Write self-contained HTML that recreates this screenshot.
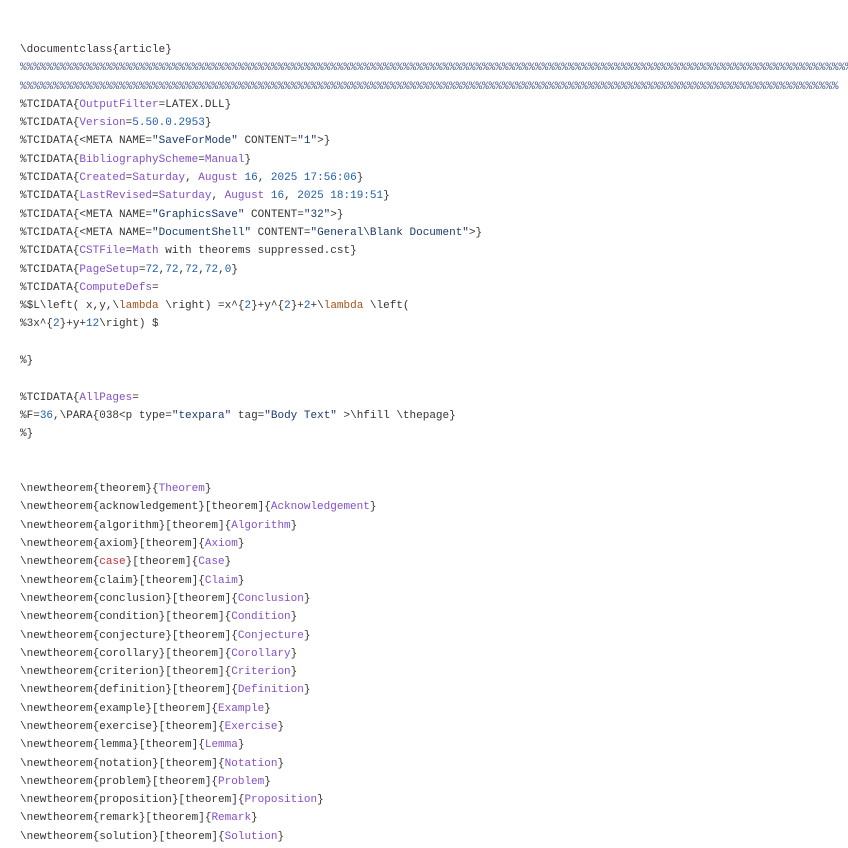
<!DOCTYPE html>
<html><head><meta charset="utf-8"><style>
html,body{margin:0;padding:0;background:#fff;width:848px;height:848px;overflow:hidden}
pre{margin:0;padding:41px 0 0 20px;font-family:"Liberation Mono",monospace;font-size:11px;line-height:18.3px;color:#333;white-space:pre}
.k{color:#8450c4}.n{color:#1f5ea8}.s{color:#1b3a6b}.l{color:#a0521e}.r{color:#c0303a}.p{color:#4a5a8c}
</style></head><body><pre>\documentclass{article}
<span class="p">%%%%%%%%%%%%%%%%%%%%%%%%%%%%%%%%%%%%%%%%%%%%%%%%%%%%%%%%%%%%%%%%%%%%%%%%%%%%%%%%%%%%%%%%%%%%%%%%%%%%%%%%%%%%%%%%%%%%%%%%%%%%%%%%</span>
<span class="p">%%%%%%%%%%%%%%%%%%%%%%%%%%%%%%%%%%%%%%%%%%%%%%%%%%%%%%%%%%%%%%%%%%%%%%%%%%%%%%%%%%%%%%%%%%%%%%%%%%%%%%%%%%%%%%%%%%%%%%%%%%%%</span>
%TCIDATA{<span class="k">OutputFilter</span>=LATEX.DLL}
%TCIDATA{<span class="k">Version</span>=<span class="n">5.50.0.2953</span>}
%TCIDATA{&lt;META NAME=<span class="s">"SaveForMode"</span> CONTENT=<span class="s">"1"</span>&gt;}
%TCIDATA{<span class="k">BibliographyScheme</span>=<span class="k">Manual</span>}
%TCIDATA{<span class="k">Created</span>=<span class="k">Saturday</span>, <span class="k">August</span> <span class="n">16</span>, <span class="n">2025 17:56:06</span>}
%TCIDATA{<span class="k">LastRevised</span>=<span class="k">Saturday</span>, <span class="k">August</span> <span class="n">16</span>, <span class="n">2025 18:19:51</span>}
%TCIDATA{&lt;META NAME=<span class="s">"GraphicsSave"</span> CONTENT=<span class="s">"32"</span>&gt;}
%TCIDATA{&lt;META NAME=<span class="s">"DocumentShell"</span> CONTENT=<span class="s">"General\Blank Document"</span>&gt;}
%TCIDATA{<span class="k">CSTFile</span>=<span class="k">Math</span> with theorems suppressed.cst}
%TCIDATA{<span class="k">PageSetup</span>=<span class="n">72</span>,<span class="n">72</span>,<span class="n">72</span>,<span class="n">72</span>,<span class="n">0</span>}
%TCIDATA{<span class="k">ComputeDefs</span>=
%$L\left( x,y,\<span class="l">lambda</span> \right) =x^{<span class="n">2</span>}+y^{<span class="n">2</span>}+<span class="n">2</span>+\<span class="l">lambda</span> \left(
%3x^{<span class="n">2</span>}+y+<span class="n">12</span>\right) $

%}

%TCIDATA{<span class="k">AllPages</span>=
%F=<span class="n">36</span>,\PARA{038&lt;p type=<span class="s">"texpara"</span> tag=<span class="s">"Body Text"</span> &gt;\hfill \thepage}
%}


\newtheorem{theorem}{<span class="k">Theorem</span>}
\newtheorem{acknowledgement}[theorem]{<span class="k">Acknowledgement</span>}
\newtheorem{algorithm}[theorem]{<span class="k">Algorithm</span>}
\newtheorem{axiom}[theorem]{<span class="k">Axiom</span>}
\newtheorem{<span class="r">case</span>}[theorem]{<span class="k">Case</span>}
\newtheorem{claim}[theorem]{<span class="k">Claim</span>}
\newtheorem{conclusion}[theorem]{<span class="k">Conclusion</span>}
\newtheorem{condition}[theorem]{<span class="k">Condition</span>}
\newtheorem{conjecture}[theorem]{<span class="k">Conjecture</span>}
\newtheorem{corollary}[theorem]{<span class="k">Corollary</span>}
\newtheorem{criterion}[theorem]{<span class="k">Criterion</span>}
\newtheorem{definition}[theorem]{<span class="k">Definition</span>}
\newtheorem{example}[theorem]{<span class="k">Example</span>}
\newtheorem{exercise}[theorem]{<span class="k">Exercise</span>}
\newtheorem{lemma}[theorem]{<span class="k">Lemma</span>}
\newtheorem{notation}[theorem]{<span class="k">Notation</span>}
\newtheorem{problem}[theorem]{<span class="k">Problem</span>}
\newtheorem{proposition}[theorem]{<span class="k">Proposition</span>}
\newtheorem{remark}[theorem]{<span class="k">Remark</span>}
\newtheorem{solution}[theorem]{<span class="k">Solution</span>}
</pre></body></html>
